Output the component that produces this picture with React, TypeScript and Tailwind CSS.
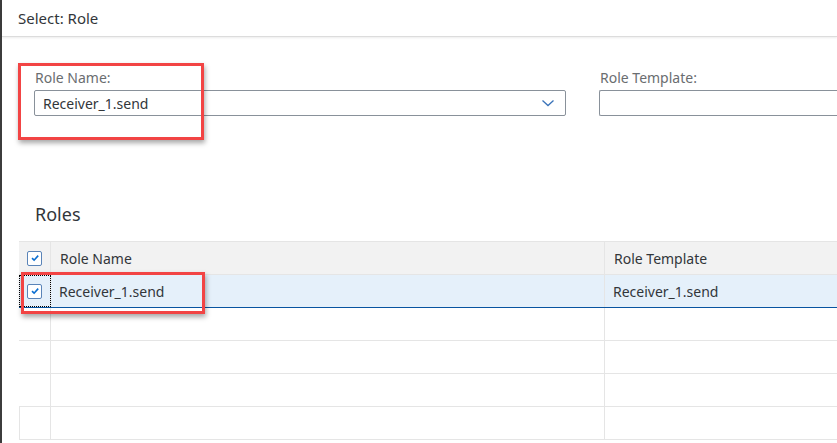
import React from "react";

const font = { fontFamily: '"Noto Sans", "Liberation Sans", Arial, sans-serif' };

function Check() {
  return (
    <div className="w-[15px] h-[15px] border border-[#5a84b8] bg-white rounded-[2px] flex items-center justify-center">
      <svg width="10" height="10" viewBox="0 0 10 10">
        <path d="M2 5.2 L4.1 7.2 L8.2 2.6" fill="none" stroke="#0a6ed1" strokeWidth="1.6" />
      </svg>
    </div>
  );
}

function EmptyRow() {
  return (
    <div className="flex h-[33px] border-b border-[#e5e5e5]">
      <div className="w-[32px] shrink-0 border-r border-[#e5e5e5]" />
      <div className="w-[554px] shrink-0 border-r border-[#e5e5e5]" />
      <div className="flex-1" />
    </div>
  );
}

export default function App() {
  return (
    <div className="relative w-[837px] h-[443px] bg-white overflow-hidden flex text-[#32363a]" style={font}>
      <div className="w-[2px] shrink-0 bg-[#3c3c3c]" />
      <div className="flex-1 flex flex-col min-w-0">
        <div className="h-[37px] shrink-0 flex items-center pl-[16px] border-b border-[#dcdcdc] shadow-[0_1px_2px_rgba(0,0,0,0.08)] text-[15px] text-[#32363a]">
          Select: Role
        </div>
        <div className="flex pt-[32px] pl-[32px]">
          <div className="w-[532px] shrink-0 flex flex-col">
            <div className="text-[14px] leading-[18px] text-[#6a6d70] pl-[1px]">Role Name:</div>
            <div className="mt-[3px] h-[26px] border border-[#89919a] rounded-[2px] flex items-center pl-[8px] pr-[10px] text-[14px]">
              <span className="flex-1">Receiver_1.send</span>
              <svg width="14" height="10" viewBox="0 0 14 10">
                <path d="M1.5 2.5 L7 7.5 L12.5 2.5" fill="none" stroke="#3a73b9" strokeWidth="1.3" />
              </svg>
            </div>
          </div>
          <div className="ml-[33px] flex-1 flex flex-col">
            <div className="text-[14px] leading-[18px] text-[#6a6d70] pl-[1px]">Role Template:</div>
            <div className="mt-[3px] h-[26px] border border-r-0 border-[#89919a] rounded-l-[2px]" />
          </div>
        </div>
        <div className="pl-[33px] mt-[86px] text-[18px] leading-[24px] text-[#32363a]">Roles</div>
        <div className="ml-[17px] mt-[15px] flex flex-col text-[14px]">
          <div className="flex h-[34px] bg-[#f2f2f2] border-y border-[#e5e5e5]">
            <div className="w-[32px] shrink-0 border-r border-[#e5e5e5] flex items-center justify-center">
              <Check />
            </div>
            <div className="w-[554px] shrink-0 border-r border-[#e5e5e5] flex items-center pl-[9px] text-[#32363a]">Role Name</div>
            <div className="flex-1 flex items-center pl-[9px] text-[#32363a]">Role Template</div>
          </div>
          <div className="flex h-[33px] bg-[#e5f0fa] border-b border-[#0854a0]">
            <div className="w-[32px] shrink-0 border-r border-[#e5e5e5] flex items-center justify-center outline outline-1 outline-dotted outline-black -outline-offset-1">
              <Check />
            </div>
            <div className="w-[554px] shrink-0 border-r border-[#e5e5e5] flex items-center pl-[8px]">Receiver_1.send</div>
            <div className="flex-1 flex items-center pl-[8px]">Receiver_1.send</div>
          </div>
          <EmptyRow />
          <EmptyRow />
          <EmptyRow />
          <div className="flex h-[33px] border-b border-l border-[#e5e5e5]" >
            <div className="w-[31px] shrink-0 border-r border-[#e5e5e5]" />
            <div className="w-[554px] shrink-0 border-r border-[#e5e5e5]" />
            <div className="flex-1" />
          </div>
        </div>
      </div>
      <div className="absolute left-[18px] top-[63px] w-[186px] h-[77px] border-[3px] border-[#f24444] shadow-[1px_3px_5px_rgba(0,0,0,0.35)]" />
      <div className="absolute left-[21px] top-[272px] w-[184px] h-[42px] border-[3px] border-[#f24444] shadow-[1px_3px_5px_rgba(0,0,0,0.35)]" />
    </div>
  );
}
